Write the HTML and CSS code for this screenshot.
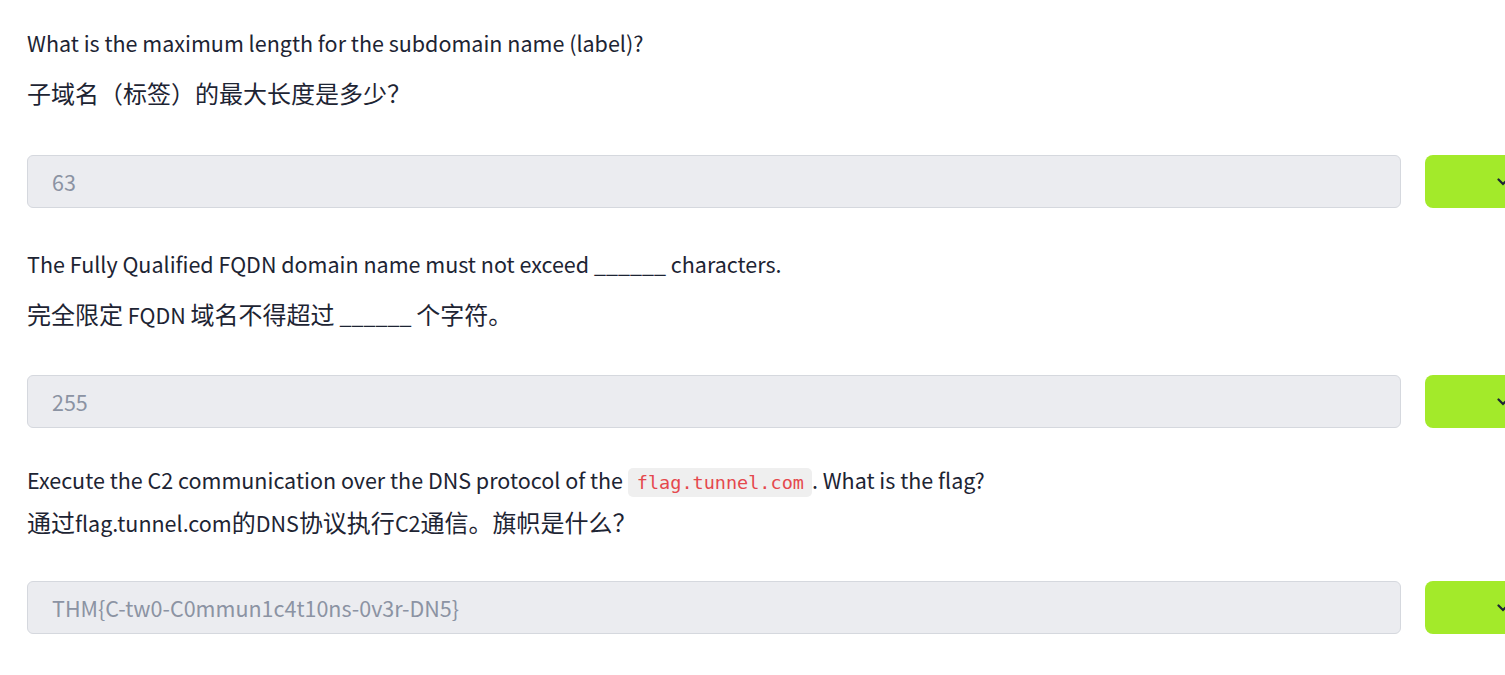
FILE: index.html
```html
<!DOCTYPE html>
<html lang="en">
<head>
<meta charset="utf-8">
<link rel="stylesheet" href="styles.css">
</head>
<body>
<div class="page">
  <section class="q">
    <p class="en">What is the maximum length for the subdomain name (label)?</p>
    <p class="zh">子域名（标签）的最大长度是多少？</p>
    <div class="answer-row">
      <div class="answer">63</div>
      <div class="submit"><svg width="12" height="8" viewBox="0 0 12 8"><path d="M1.5 1.5 L6 6 L10.5 1.5" fill="none" stroke="#1d2433" stroke-width="2.2" stroke-linecap="round"/></svg></div>
    </div>
  </section>
  <section class="q q2">
    <p class="en">The Fully Qualified FQDN domain name must not exceed ______ characters.</p>
    <p class="zh">完全限定<span class="lat"> FQDN </span>域名不得超过<span class="lat"> ______ </span>个字符。</p>
    <div class="answer-row">
      <div class="answer">255</div>
      <div class="submit"><svg width="12" height="8" viewBox="0 0 12 8"><path d="M1.5 1.5 L6 6 L10.5 1.5" fill="none" stroke="#1d2433" stroke-width="2.2" stroke-linecap="round"/></svg></div>
    </div>
  </section>
  <section class="q q3">
    <p class="en">Execute the C2 communication over the DNS protocol of the <code>flag.tunnel.com</code>. What is the flag?</p>
    <p class="zh">通过<span class="lat">flag.tunnel.com</span>的<span class="lat">DNS</span>协议执行<span class="lat">C2</span>通信。旗帜是什么？</p>
    <div class="answer-row">
      <div class="answer">THM{C-tw0-C0mmun1c4t10ns-0v3r-DN5}</div>
      <div class="submit"><svg width="12" height="8" viewBox="0 0 12 8"><path d="M1.5 1.5 L6 6 L10.5 1.5" fill="none" stroke="#1d2433" stroke-width="2.2" stroke-linecap="round"/></svg></div>
    </div>
  </section>
</div>
</body>
</html>
```

FILE: styles.css
```css
html, body {
  margin: 0;
  padding: 0;
  background: #ffffff;
  overflow: hidden;
}
body {
  font-family: "Noto Sans CJK SC", "Noto Sans", sans-serif;
  color: #1d2433;
}
.page {
  width: 1560px;
  padding: 26px 0 0 27px;
}
.q p {
  margin: 0;
}
.en {
  font-size: 21.5px;
  line-height: 34px;
}
.zh {
  font-size: 24px;
  line-height: 36px;
  margin-top: 15px !important;
}
.lat {
  font-size: 21.5px;
}
.answer-row {
  display: flex;
  gap: 24px;
  margin-top: 44px;
  margin-bottom: 39px;
}
.q2 .answer-row {
  margin-top: 42px;
}
.answer {
  width: 1374px;
  height: 53px;
  box-sizing: border-box;
  background: #ebecf0;
  border: 1px solid #d5d8de;
  border-radius: 6px;
  padding: 0 0 0 24px;
  font-size: 21.5px;
  line-height: 51px;
  color: #8b93a3;
}
.submit {
  width: 110px;
  height: 53px;
  background: #a3ea2a;
  border-radius: 8px;
  display: flex;
  align-items: center;
  padding-left: 72px;
  box-sizing: border-box;
}
.q3 {
  margin-top: -4px;
}
.q3 .zh {
  margin-top: 4px !important;
}
.q3 .answer-row {
  margin-top: 40px;
}
code {
  font-family: "DejaVu Sans Mono", "Liberation Mono", monospace;
  font-size: 18.5px;
  color: #e5484d;
  background: #efefef;
  border-radius: 5px;
  padding: 4px 8px 4px 9px;
}
```
